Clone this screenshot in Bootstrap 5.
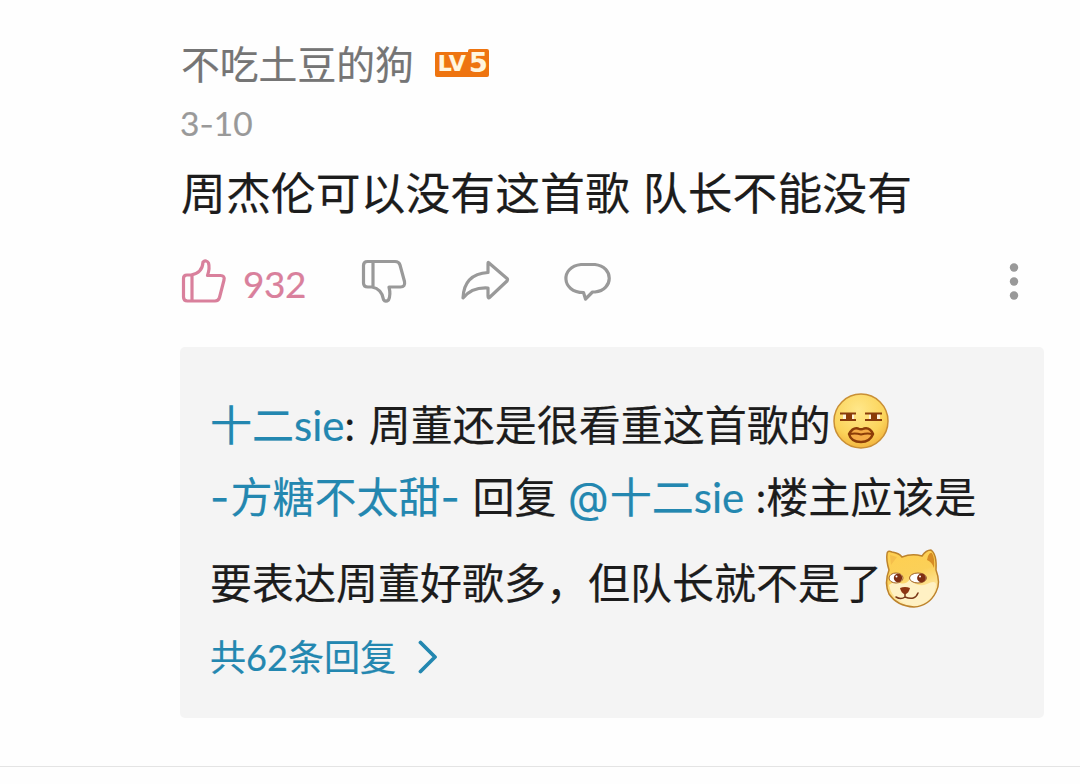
<!DOCTYPE html>
<html lang="zh-CN">
<head>
  <meta charset="UTF-8">
  <meta name="viewport" content="width=device-width, initial-scale=1.0">
  <title>评论</title>
  <link rel="stylesheet" href="https://cdn.jsdelivr.net/npm/bootstrap@5.3.0/dist/css/bootstrap.min.css">
  <style>
    body {
      font-family: Lato, "Noto Sans CJK SC", sans-serif;
      color: #1c1c1c;
      background: #fefefe;
      -webkit-text-stroke: .2px currentColor;
    }
    .comment {
      height: 767px;
      padding: 39px 36px 0 180px;
      border-bottom: 1px solid #e4e4e4;
      white-space: nowrap;
    }
    .wide { font-family: Inter, sans-serif; line-height: 1; }
    .user-name { font-size: 38.8px; line-height: 50px; color: #757575; padding-left: 1px; }
    .level {
      margin-left: 21px;
      margin-bottom: 3px;
      font: bold 22px/24px "DejaVu Sans", sans-serif;
      color: #fff6df;
    }
    .level span { background: #ee7410; height: 25px; }
    .level-lv { width: 33px; border-radius: 2px 0 0 2px; padding-left: 1px; }
    .level .level-num { width: 21px; height: 28px; line-height: 28px; border-radius: 2px 2px 2px 0; font-size: 27px; }
    .post-date { height: 40px; font-size: 33.5px; line-height: 40px; margin-top: 14px; color: #999; }
    .post-date .wide { font-size: 31px; }
    .post-text { font-size: 44.8px; line-height: 60px; margin-top: 20px; padding-left: 1px; word-spacing: 1.5px; letter-spacing: .08px; }
    .actions { height: 50px; margin-top: 34px; color: #999; }
    .actions svg { flex: none; }
    .like { width: 181px; color: #d9809c; font-size: 37px; }
    .like-count { letter-spacing: -.5px; padding-top: 3px; }
    .share, .talk { margin-left: 47px; }
    .replies {
      height: 371px;
      margin-top: 40px;
      padding: 42px 30px 0;
      background: #f4f4f4;
      border-radius: 5px;
      font-size: 42px;
      line-height: 72px;
    }
    .replies a, .blue { color: #2387b0; text-decoration: none; }
    .first-reply { word-spacing: 3px; }
    .second-reply { height: 72px; word-spacing: .7px; }
    .second-reply .wide { letter-spacing: 1.2px; }
    .emoji-face { margin: 0 0 9px; }
    .emoji-doge { margin: 0 0 6px 1px; }
    .line-tall { margin-top: 14px; }
    .more { font-size: 36.1px; line-height: 60px; margin-top: 8px; }
    .more-arrow { margin-left: 22px; }
  </style>
</head>
<body>
  <main class="comment">
    <div class="d-flex align-items-center">
      <span class="user-name">不吃土豆的狗</span>
      <span class="level d-flex align-items-end text-center">
        <span class="level-lv">LV</span><span class="level-num">5</span>
      </span>
    </div>
    <div class="post-date">3<span class="wide">-</span>10</div>
    <div class="post-text">周杰伦可以没有这首歌 队长不能没有</div>

    <div class="actions d-flex align-items-center">
      <div class="like d-flex align-items-center">
        <svg width="47" height="50" viewBox="0 0 47 50" fill="none" stroke="currentColor" stroke-width="3.200" stroke-linejoin="round">
          <path d="M11 18H7Q3.500 18 3.500 21.500V40Q3.500 44 7.500 44H35Q38.500 44 39.500 40.500L44 23Q45 18.500 40.500 18.500H27.500Q30 11 28.500 6Q26.500 2.500 23 5Q22.500 16 11 18ZM12 18V44"/>
        </svg>
        <span class="like-count ms-3">932</span>
      </div>
      <svg width="47" height="50" viewBox="0 0 47 50" fill="none" stroke="currentColor" stroke-width="3.200" stroke-linejoin="round">
        <path d="M11 30H7Q2.500 30 2.500 26V8.500Q2.500 4.500 6.500 4.500H34Q38 4.500 39 8L43.500 24.500Q44.500 30 39.500 30H28Q30 38 27.500 43Q24.500 45.500 22.500 42.500Q21 32 11 30ZM12 4.500V30"/>
      </svg>
      <svg class="share" width="56" height="50" viewBox="0 0 56 50" fill="none" stroke="currentColor" stroke-width="3.200" stroke-linejoin="round">
        <path d="M34 6Q33 4.500 33 7V15.500Q9 17 8 41Q17 30 33 31V39Q33 42 35 40L52 24Q53 22.500 52 21.500Z"/>
      </svg>
      <svg class="talk" width="56" height="50" viewBox="0 0 56 50" fill="none" stroke="currentColor" stroke-width="3.200" stroke-linejoin="round">
        <path d="M23 7.500H37C56 9.500 56 33 37 35H34.500L27.500 42L25.500 35.500C3 35.500 2 9.500 23 7.500Z"/>
      </svg>
      <svg class="ms-auto me-4" width="12" height="40" viewBox="0 0 12 40" fill="currentColor">
        <circle cx="6" cy="5.500" r="4.200"/><circle cx="6" cy="19.500" r="4.200"/><circle cx="6" cy="33.500" r="4.200"/>
      </svg>
    </div>

    <section class="replies">
      <div class="first-reply d-flex align-items-center">
        <span><a href="#">十二sie</a>: 周董还是很看重这首歌的</span>
        <svg class="emoji-face" width="60" height="60" viewBox="0 0 60 60">
          <defs>
            <radialGradient id="faceFill" cx=".45" cy=".3" r=".75">
              <stop offset="0" stop-color="#ffe78a"/><stop offset=".65" stop-color="#fbd45b"/><stop offset="1" stop-color="#f1ae38"/>
            </radialGradient>
          </defs>
          <circle cx="30" cy="30" r="27" fill="url(#faceFill)" stroke="#c98f35" stroke-width="1.500"/>
          <path d="M12 23H23V29H12ZM38 23H49V29H38Z" fill="#fff3d8"/>
          <path d="M15 22.500H21V29H15ZM40 22.500H46V29H40Z" fill="#8c3c08"/>
          <path d="M9 22.500H25M9 29H25M34 22.500H51M34 29H51" stroke="#883c0b" stroke-width="2"/>
          <path d="M18 43Q22 36 27 37.500Q30 39 33 37.500Q39 36 42 43Q39 51 30 51Q20 51 18 43Z" fill="#f6ab46" stroke="#8c3c08" stroke-width="2.500" stroke-linejoin="round"/>
          <path d="M19 43Q25 42 30 43.500Q36 42 41 43" fill="none" stroke="#8c3c08" stroke-width="2"/>
        </svg>
      </div>
      <div class="second-reply"><a href="#"><span class="wide">-</span>方糖不太甜<span class="wide">-</span></a> 回复 <a href="#"><span class="wide">@</span>十二sie</a> :楼主应该是</div>
      <div class="line-tall d-flex align-items-center">
        <span>要表达周董好歌多，但队长就不是了</span>
        <svg class="emoji-doge" width="60" height="64" viewBox="0 0 60 64">
          <defs>
            <linearGradient id="dogeFill" x2=".3" y2="1">
              <stop offset="0" stop-color="#ffcf50"/><stop offset=".5" stop-color="#fbd058"/><stop offset="1" stop-color="#fff0bd"/>
            </linearGradient>
          </defs>
          <path d="M4 6Q4 2 9 4Q16 5 19 9Q29 5 39 8Q43 2 48 2Q54 6 53 22Q58 35 53 44Q46 58 31 59Q14 58 6 46Q1 35 6 22Q3 12 4 6Z" fill="url(#dogeFill)" stroke="#bd832c" stroke-width="1.500"/>
          <path d="M45 8Q47 4 49 5Q52 10 51 20Q49 14 44 12Z" fill="#d78c24"/>
          <path d="M7 7L14 9L8 17Z" fill="#f5bf4c"/>
          <path d="M6 37Q10 33 17 35Q23 37 27 31Q34 40 44 36Q52 32 53 36Q52 49 42 54Q31 60 19 54Q8 49 6 37Z" fill="#fff1c4"/>
          <ellipse cx="13" cy="30" rx="7" ry="5" fill="#fff" stroke="#a06121"/>
          <ellipse cx="35" cy="30" rx="8.500" ry="5" fill="#fff" stroke="#a06121"/>
          <circle cx="15" cy="30" r="4.200" fill="#7f2e12"/><circle cx="38.500" cy="30" r="4.400" fill="#7f2e12"/>
          <circle cx="13.500" cy="28.500" r="1" fill="#fff"/><circle cx="37" cy="28.500" r="1" fill="#fff"/>
          <path d="M17 40Q22 38 27 40Q26 45 22 46.500Q18 45 17 40Z" fill="#8d3513"/>
          <path d="M22 46V49Q18 52 13 49M22 49Q32 53 35 45" fill="none" stroke="#7b3919" stroke-width="1.500" stroke-linecap="round"/>
        </svg>
      </div>
      <div class="more blue d-flex align-items-center">
        <span>共62条回复</span>
        <svg class="more-arrow" width="20" height="36" viewBox="0 0 20 36" fill="none" stroke="currentColor" stroke-width="3.800" stroke-linecap="round" stroke-linejoin="round">
          <path d="M2.500 3.500L17 18L2.500 32.500"/>
        </svg>
      </div>
    </section>
  </main>
  <script src="https://cdn.jsdelivr.net/npm/bootstrap@5.3.0/dist/js/bootstrap.bundle.min.js"></script>
</body>
</html>
